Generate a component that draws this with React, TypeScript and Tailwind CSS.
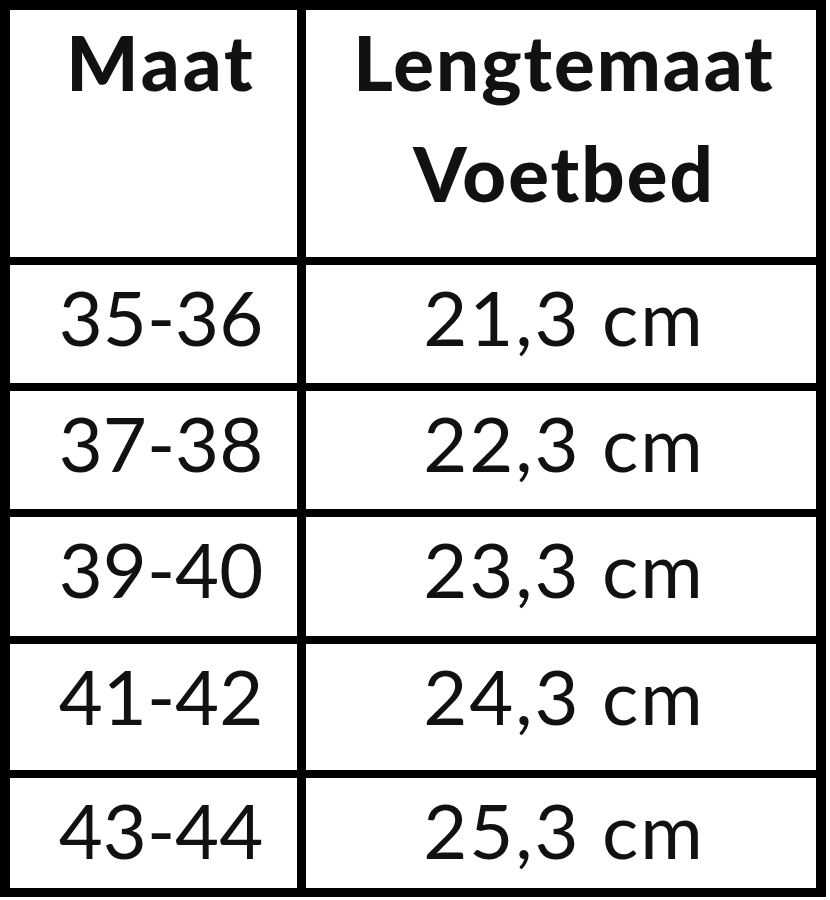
import React from "react";

const rows = [
  { size: "35-36", length: "21,3 cm", h: "h-[126px]" },
  { size: "37-38", length: "22,3 cm", h: "h-[126px]" },
  { size: "39-40", length: "23,3 cm", h: "h-[127px]" },
  { size: "41-42", length: "24,3 cm", h: "h-[134px]" },
  { size: "43-44", length: "25,3 cm", h: "h-[110px]" },
];

const App = () => {
  return (
    <div className="bg-white w-[830px] h-[900px] font-['Lato',sans-serif] text-[#111]">
      <div className="w-[826px] border-t-[10px] border-l-[10px] border-r-[10px] border-b-[9px] border-black box-border">
        {/* header */}
        <div className="flex h-[255px] border-b-[8px] border-black">
          <div className="w-[296px] border-r-[9px] border-black flex justify-center pl-[15px]">
            <div className="text-[76px] font-black tracking-[3px] leading-[111px] -mt-[4px]">Maat</div>
          </div>
          <div className="flex-1 flex justify-center pl-[6px]">
            <div className="text-[76px] font-black tracking-[2px] leading-[111px] -mt-[4px] text-center">
              Lengtemaat
              <br />
              Voetbed
            </div>
          </div>
        </div>
        {rows.map((r, i) => (
          <div
            key={r.size}
            className={`flex ${r.h} ${i < rows.length - 1 ? "border-b-[8px] border-black" : ""}`}
          >
            <div className="w-[296px] border-r-[9px] border-black flex justify-center pl-[15px] pt-[6px]">
              <div className="text-[76px] leading-[91px]">{r.size}</div>
            </div>
            <div className="flex-1 flex justify-center pl-[6px] pt-[6px]">
              <div className="text-[76px] tracking-[2px] leading-[91px]">{r.length}</div>
            </div>
          </div>
        ))}
      </div>
    </div>
  );
};

export default App;
